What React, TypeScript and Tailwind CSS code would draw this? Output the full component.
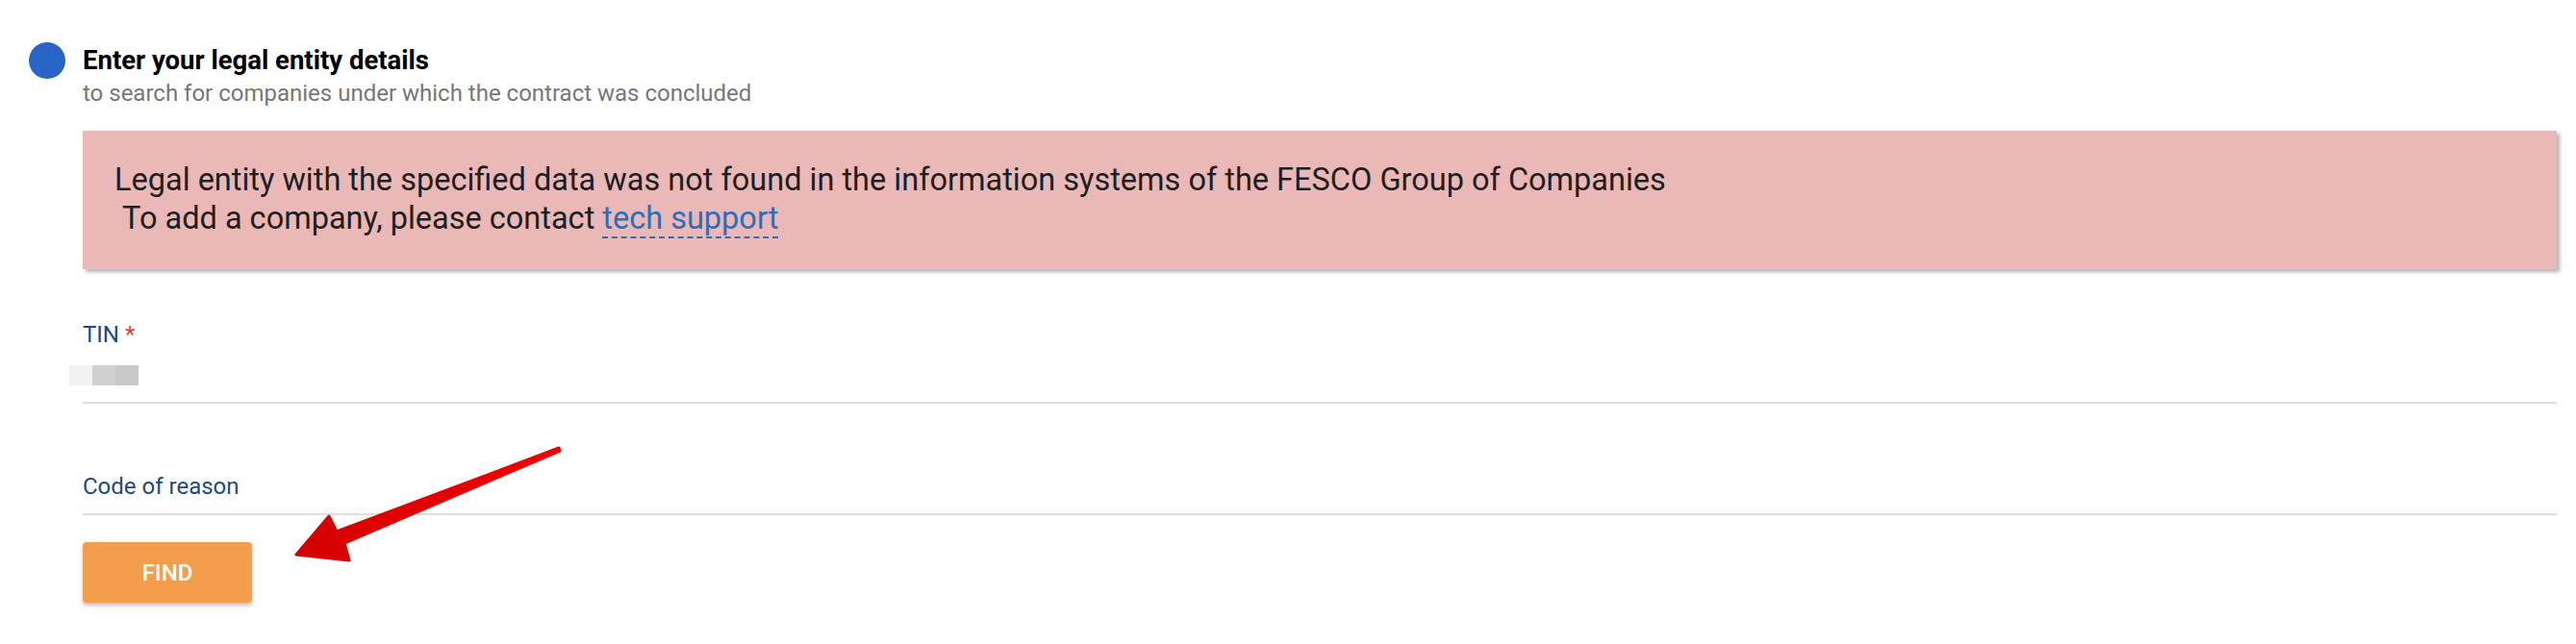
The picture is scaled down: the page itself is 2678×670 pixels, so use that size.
import React from 'react';

const RedArrow: React.FC = () => (
  <svg
    className="absolute left-0 top-0 pointer-events-none"
    width={700}
    height={670}
    viewBox="0 0 700 670"
  >
    <defs>
      <linearGradient id="arrowFill" x1="581" y1="467" x2="308" y2="577" gradientUnits="userSpaceOnUse">
        <stop offset="0" stopColor="#f20000" />
        <stop offset="1" stopColor="#d40000" />
      </linearGradient>
    </defs>
    <polygon
      points="581,466 350,553 342,537 308,577 363,583 358,565 582,469"
      fill="url(#arrowFill)"
      stroke="url(#arrowFill)"
      strokeWidth={3}
      strokeLinejoin="round"
    />
  </svg>
);

const App: React.FC = () => {
  return (
    <div className="relative w-[2678px] h-[670px] bg-white overflow-hidden font-['Roboto',sans-serif]">
      <div className="flex pl-[30px] pr-[20px] pt-[44px]">
        <div className="w-[38px] h-[38px] rounded-full bg-[#2764c6] shrink-0" />
        <div className="ml-[18px] flex-1 flex flex-col">
          <h1 className="text-[27.5px] leading-[38px] font-bold text-black">Enter your legal entity details</h1>
          <p className="mt-[2px] text-[24px] leading-[26px] text-[#777777]">
            to search for companies under which the contract was concluded
          </p>

          <div className="mt-[26px] h-[144px] bg-[#ebb8b8] shadow-[3px_3px_4px_rgba(0,0,0,0.3)] pl-[33px] pt-[31px] text-[32.5px] leading-[40px] text-[#1e1e1e]">
            <div>Legal entity with the specified data was not found in the information systems of the FESCO Group of Companies</div>
            <div>
              &nbsp;To add a company, please contact{' '}
              <a className="text-[#2f6db5] border-b-2 border-dashed border-[#2f6db5] cursor-pointer">tech support</a>
            </div>
          </div>

          <label className="mt-[54px] text-[24px] leading-[28px] text-[#1d4a80]">
            TIN <span className="text-[#e53935]">*</span>
          </label>
          <div className="mt-[18px] -ml-[14px] flex h-[21px]">
            <div className="w-[24px] bg-[#f2f2f2]" />
            <div className="w-[24px] bg-[#d0d0d0]" />
            <div className="w-[24px] bg-[#c9c9c9]" />
          </div>
          <div className="mt-[17px] h-[2px] bg-[#dedede]" />

          <label className="mt-[72px] text-[24px] leading-[28px] text-[#1d4a80]">Code of reason</label>
          <div className="mt-[14px] h-[2px] bg-[#dedede]" />

          <div className="mt-[28px]">
            <button className="w-[176px] h-[63px] rounded-[4px] bg-[#f29e4c] text-white text-[24px] font-medium uppercase shadow-[0_3px_4px_rgba(0,0,0,0.25)]">
              Find
            </button>
          </div>
        </div>
      </div>
      <RedArrow />
    </div>
  );
};

export default App;
